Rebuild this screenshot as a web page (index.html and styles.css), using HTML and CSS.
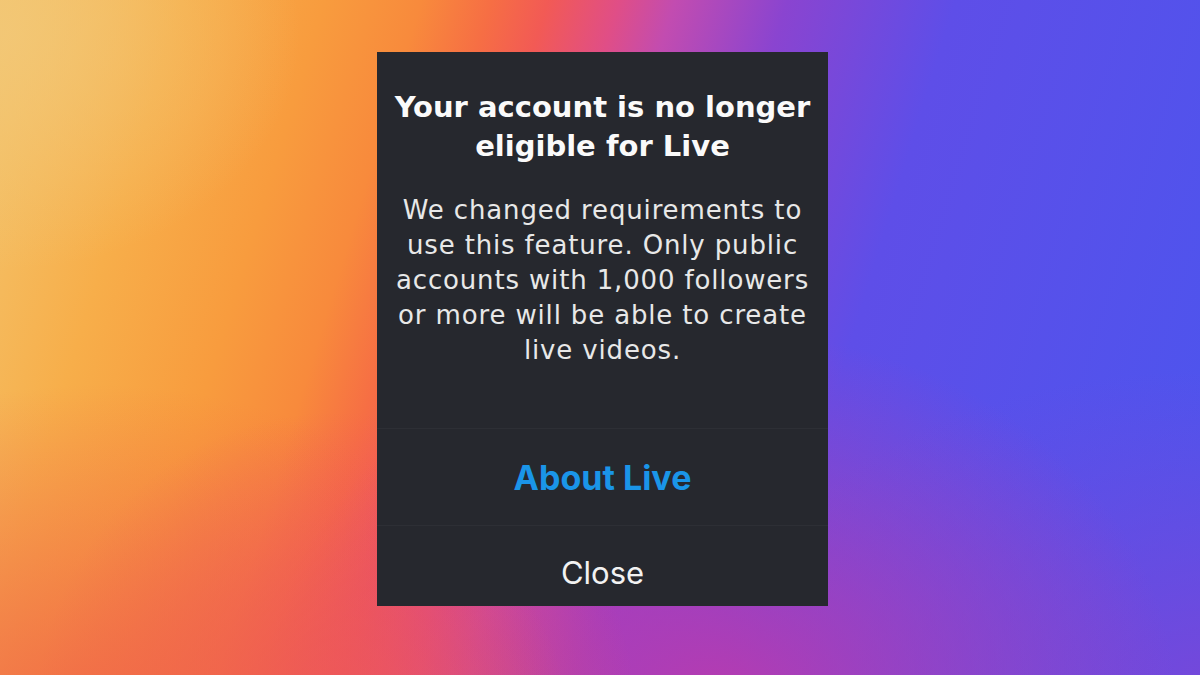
FILE: index.html
```html
<!DOCTYPE html>
<html lang="en">
<head>
    <meta charset="UTF-8">
    <meta name="viewport" content="width=device-width, initial-scale=1.0">
    <title>Live eligibility</title>
    <link rel="stylesheet" href="styles.css">
</head>
<body>
    <div class="dialog">
        <div class="dialog-body">
            <h2 class="dialog-title">Your account is no longer eligible for Live</h2>
            <p class="dialog-text">We changed requirements to use this feature. Only public accounts with 1,000 followers or more will be able to create live videos.</p>
        </div>
        <button class="dialog-action primary">About Live</button>
        <button class="dialog-action close">Close</button>
    </div>
</body>
</html>
```

FILE: styles.css
```css
body {
    margin: 0;
    height: 100vh;
    display: flex;
    justify-content: center;
    align-items: flex-start;
    font-family: 'Inter', 'Noto Sans', sans-serif;
    background:
        radial-gradient(ellipse 25% 35% at 0% 5%, rgba(242, 200, 120, 0.8), rgba(242, 200, 120, 0) 100%),
        radial-gradient(ellipse 40% 55% at 8% 112%, rgba(240, 100, 72, 0.95), rgba(240, 100, 72, 0) 100%),
        radial-gradient(ellipse 25% 45% at 28% 106%, rgba(236, 76, 104, 0.9), rgba(236, 76, 104, 0) 100%),
        radial-gradient(ellipse 38% 55% at 60% 104%, rgba(188, 58, 172, 0.95), rgba(188, 58, 172, 0) 100%),
        radial-gradient(ellipse 40% 45% at 100% 100%, rgba(122, 70, 216, 0.85), rgba(122, 70, 216, 0) 100%),
        linear-gradient(107deg, #f3c46c 0%, #f7ae4a 13%, #f89c3e 23%, #f88a3c 30%, #f66e44 35%, #f25a55 39%, #e04e86 44%, #c24cb0 48%, #8a44d0 56%, #5e4ee8 68%, #4b55ee 100%);
    overflow: hidden;
}

.dialog {
    width: 451px;
    height: 554px;
    margin: 52px 0 0 5px;
    background: #26282e;
    display: flex;
    flex-direction: column;
    text-align: center;
}

.dialog-body {
    padding: 36px 12px 0;
    height: 377px;
    box-sizing: border-box;
    border-bottom: 1px solid #2d2f35;
}

.dialog-title {
    margin: 0;
    font-family: 'DejaVu Sans', sans-serif;
    font-size: 29px;
    line-height: 39px;
    font-weight: 700;
    color: #fafafa;
}

.dialog-text {
    margin: 27px 0 0;
    font-family: 'DejaVu Sans', sans-serif;
    font-size: 26px;
    line-height: 35px;
    letter-spacing: 0.85px;
    color: #e8e8e8;
}

.dialog-action {
    border: none;
    background: none;
    font-family: inherit;
    padding: 0;
    box-sizing: border-box;
    cursor: pointer;
}

.dialog-action.primary {
    height: 97px;
    font-size: 34px;
    font-weight: 700;
    color: #1a95e8;
    border-bottom: 1px solid #2d2f35;
}

.dialog-action.close {
    height: 80px;
    padding-top: 13px;
    font-size: 31px;
    color: #f2f2f2;
}
```
